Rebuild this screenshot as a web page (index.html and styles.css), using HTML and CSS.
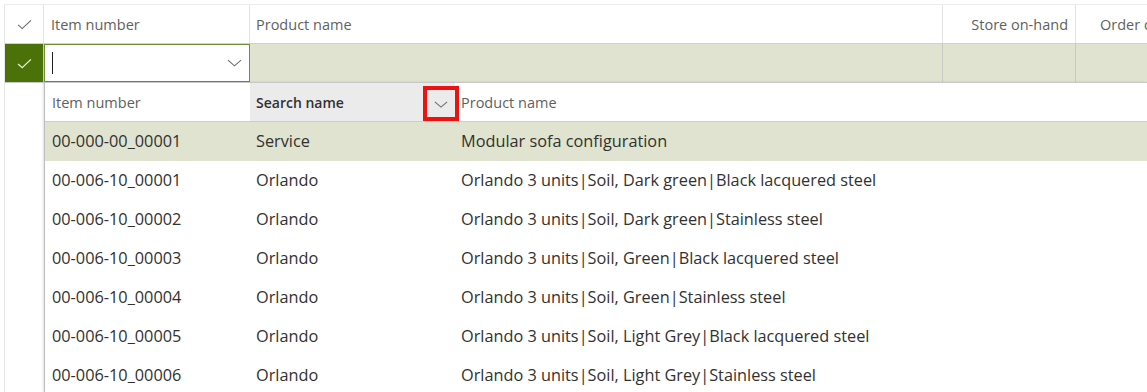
FILE: index.html
```html
<!DOCTYPE html>
<html lang="en">
<head>
    <meta charset="UTF-8">
    <meta name="viewport" content="width=device-width, initial-scale=1.0">
    <title>Items</title>
    <link rel="stylesheet" href="styles.css">
</head>
<body>
    <div class="grid">
        <div class="grid-head">
            <div class="cell check-col">
                <svg class="check" viewBox="0 0 16 12"><path d="M1 6.5 L5.5 10.5 L15 1.5"/></svg>
            </div>
            <div class="cell col-item">Item number</div>
            <div class="cell col-name">Product name</div>
            <div class="cell col-store">Store on-hand</div>
            <div class="cell col-order">Order quantity</div>
        </div>

        <div class="grid-filter">
            <div class="cell check-col is-active">
                <svg class="check" viewBox="0 0 16 12"><path d="M1 6.5 L5.5 10.5 L15 1.5"/></svg>
            </div>
            <div class="cell col-item lookup-input">
                <span class="caret"></span>
                <svg class="chevron" viewBox="0 0 16 8"><path d="M1 1 L8 7 L15 1"/></svg>
            </div>
            <div class="cell col-name"></div>
            <div class="cell col-store"></div>
            <div class="cell col-order"></div>
        </div>

        <!-- lookup dropdown opened from the item number field -->
        <div class="lookup">
            <div class="lookup-head">
                <div class="lcell l-item">Item number</div>
                <div class="lcell l-search">
                    Search name
                    <span class="sort-btn">
                        <svg class="chevron" viewBox="0 0 16 8"><path d="M1 1 L8 7 L15 1"/></svg>
                    </span>
                </div>
                <div class="lcell l-name">Product name</div>
            </div>
            <div class="lookup-body" id="lookupBody"></div>
        </div>
    </div>

    <script>
        const items = [
            ['00-000-00_00001', 'Service', 'Modular sofa configuration'],
            ['00-006-10_00001', 'Orlando', 'Orlando 3 units|Soil, Dark green|Black lacquered steel'],
            ['00-006-10_00002', 'Orlando', 'Orlando 3 units|Soil, Dark green|Stainless steel'],
            ['00-006-10_00003', 'Orlando', 'Orlando 3 units|Soil, Green|Black lacquered steel'],
            ['00-006-10_00004', 'Orlando', 'Orlando 3 units|Soil, Green|Stainless steel'],
            ['00-006-10_00005', 'Orlando', 'Orlando 3 units|Soil, Light Grey|Black lacquered steel'],
            ['00-006-10_00006', 'Orlando', 'Orlando 3 units|Soil, Light Grey|Stainless steel']
        ];

        const body = document.getElementById('lookupBody');
        items.forEach((item, i) => {
            const row = document.createElement('div');
            row.className = 'lookup-row' + (i === 0 ? ' is-selected' : '');
            row.innerHTML = `
                <div class="lcell l-item">${item[0]}</div>
                <div class="lcell l-search">${item[1]}</div>
                <div class="lcell l-name">${item[2]}</div>
            `;
            body.appendChild(row);
        });
    </script>
</body>
</html>
```

FILE: styles.css
```css
html, body {
    margin: 0;
    padding: 0;
    height: 100%;
    overflow: hidden;
    background-color: white;
}
body {
    font-family: 'Open Sans', 'Noto Sans', sans-serif;
    color: #323130;
}
.grid {
    position: relative;
    margin: 4px 0 0 4px;
    height: calc(100% - 4px);
    border-top: 1px solid #ececec;
    border-left: 1px solid #e6e6e6;
    box-sizing: border-box;
    overflow: hidden;
}
.grid-head,
.grid-filter {
    display: flex;
    height: 38px;
    border-bottom: 1px solid #d0d0d0;
}
.grid-filter {
    background-color: #dfe3cf;
    border-bottom-color: #c8c8c8;
}
.cell {
    display: flex;
    align-items: center;
    box-sizing: border-box;
    flex-shrink: 0;
    font-size: 14.5px;
    color: #5f5f5f;
    white-space: nowrap;
    overflow: hidden;
}
.grid-head .cell {
    border-right: 1px solid #e3e3e3;
}
.grid-filter .cell {
    border-right: 1px solid #c9c9c9;
}
.check-col {
    width: 39px;
    justify-content: center;
}
.col-item {
    width: 206px;
    padding-left: 7px;
}
.col-name {
    width: 693px;
    padding-left: 6px;
}
.col-store {
    width: 133px;
    justify-content: flex-end;
    padding-right: 7px;
}
.col-order {
    width: 160px;
    padding-left: 24px;
}
.check {
    width: 15px;
    height: 11px;
    fill: none;
    stroke: #6a6a6a;
    stroke-width: 1.2;
}
.check-col.is-active {
    background-color: #4a7208;
}
.check-col.is-active .check {
    stroke: #e8f0d8;
    stroke-width: 1.4;
}
.grid-filter .lookup-input {
    position: relative;
    background-color: white;
    border: 1px solid #6f8f3a;
    padding-left: 7px;
    justify-content: space-between;
    padding-right: 7px;
}
.caret {
    width: 1px;
    height: 22px;
    background-color: #222;
}
.chevron {
    width: 15px;
    height: 8px;
    fill: none;
    stroke: #6d6d6d;
    stroke-width: 1.2;
}

/* lookup dropdown */
.lookup {
    position: absolute;
    top: 77px;
    left: 39px;
    right: 0;
    bottom: 0;
    background-color: white;
    border-top: 1px solid #c8c8c8;
    border-left: 1px solid #bdbdbd;
    box-shadow: -1px 0 2px rgba(0,0,0,0.12);
}
.lookup-head,
.lookup-row {
    display: flex;
}
.lookup-head {
    height: 38px;
    border-bottom: 1px solid #cdcdcd;
}
.lookup-row {
    height: 39px;
}
.lookup-row .lcell {
    padding-bottom: 2px;
}
.lookup-row.is-selected {
    background-color: #dfe3cf;
}
.lcell {
    display: flex;
    align-items: center;
    box-sizing: border-box;
    flex-shrink: 0;
    white-space: nowrap;
    padding-left: 6px;
    font-size: 16.3px;
    color: #323130;
}
.lookup-head .lcell {
    font-size: 14.5px;
    color: #5f5f5f;
}
.l-item {
    width: 205px;
    padding-left: 7px;
}
.l-search {
    width: 205px;
}
.lookup-head .l-search {
    position: relative;
    background-color: #ebebeb;
    font-weight: 600;
    font-size: 14px;
    color: #323130;
}
.l-name {
    flex: 1;
}
.sort-btn {
    position: absolute;
    left: 173px;
    top: 3px;
    width: 36px;
    height: 35px;
    box-sizing: border-box;
    border: 4px solid #ee1111;
    display: flex;
    align-items: center;
    justify-content: center;
    z-index: 1;
}
.sort-btn .chevron {
    width: 14px;
    height: 7px;
    margin-top: 2px;
}
```
